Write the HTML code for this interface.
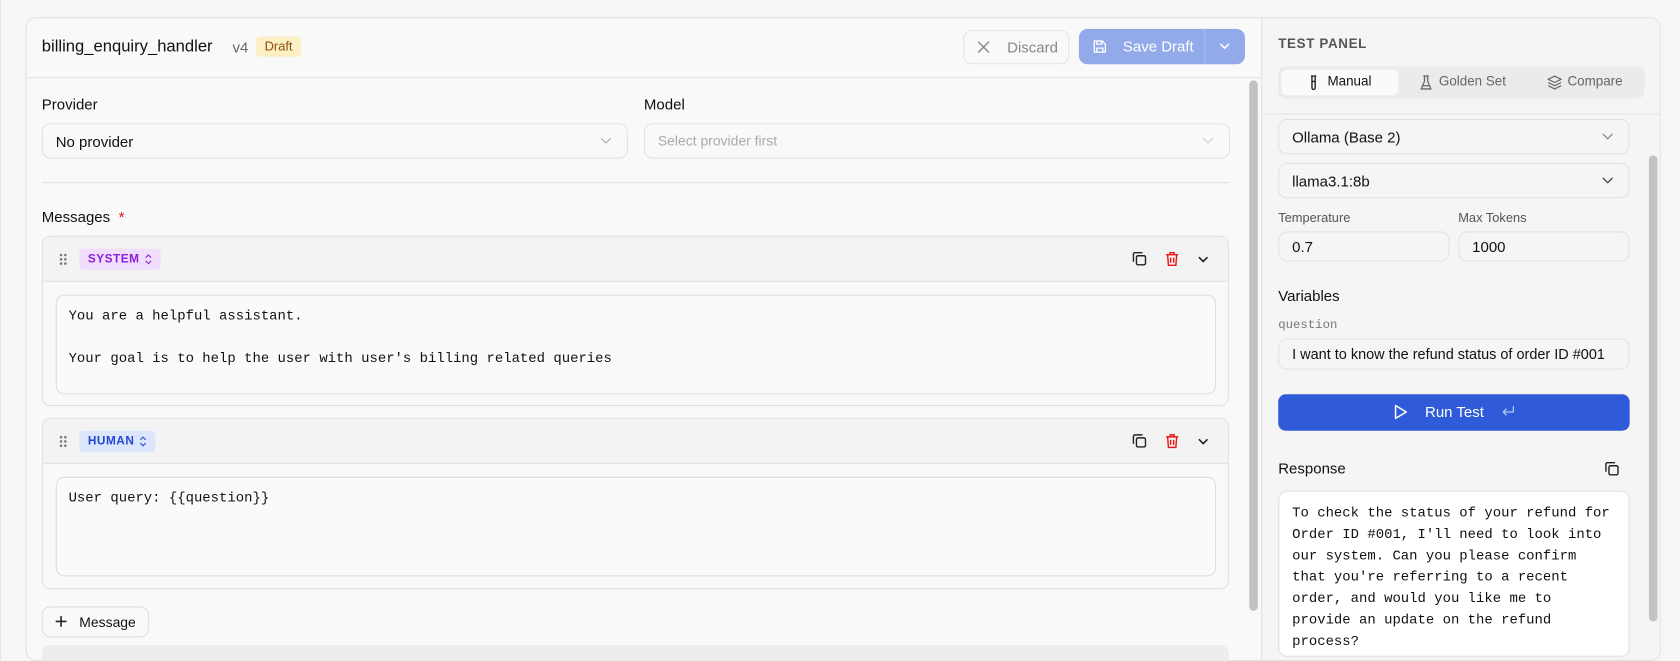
<!DOCTYPE html>
<html><head><meta charset="utf-8"><style>
*{box-sizing:border-box;margin:0;padding:0}
html,body{width:1680px;height:661px;overflow:hidden;background:#f6f6f6;font-family:"Liberation Sans",sans-serif;color:#111}
#w{position:absolute;left:0;top:0;width:1568px;height:617px;transform:scale(1.071428);transform-origin:0 0}
.a{position:absolute}
.mono{font-family:"Liberation Mono",monospace}
.inp{position:absolute;border:1px solid #e2e2e2;border-radius:8px;background:#f9f9f9;font-size:14px;display:flex;align-items:center;padding-left:12px}
.chev{position:absolute;right:14px;top:50%;margin-top:-4px}
.lbl{position:absolute;font-size:14px;font-weight:500;color:#111}
.card{position:absolute;left:39px;width:1108px;border:1px solid #e0e0e0;border-radius:8px;background:#f9f9f9;overflow:hidden}
.ch{height:42px;background:#f3f3f3;border-bottom:1px solid #e0e0e0;position:relative}
.ta{position:absolute;left:12px;right:11px;border:1px solid #dedede;border-radius:8px;background:#fafafa;font-family:"Liberation Mono",monospace;font-size:13px;padding:9px 11px;line-height:20px;white-space:pre}
.role{position:absolute;left:34px;top:11px;height:20px;border-radius:4px;font-size:11px;font-weight:700;letter-spacing:.5px;padding:0 8px;display:flex;align-items:center}
</style></head><body><div id="w">
<div class="a" style="left:0;top:0;width:1px;height:617px;background:#e6e6e6"></div>
<div class="a" style="left:24px;top:16px;width:1526px;height:601px;border:1px solid #e2e2e2;border-radius:10px;background:#f9f9f9;overflow:hidden">
 <div class="a" style="left:1152px;top:0;width:374px;height:610px;background:#f5f5f5;border-left:1px solid #e2e2e2"></div>
 <div class="a" style="left:0;top:55px;width:1152px;height:1px;background:#e2e2e2"></div>
 <div class="a" style="left:1152px;top:89px;width:374px;height:1px;background:#e2e2e2"></div>
</div>
<div class="a" style="left:39px;top:35px;font-size:15.5px;font-weight:500">billing_enquiry_handler</div>
<div class="a" style="left:217px;top:36px;font-size:14px;color:#666">v4</div>
<div class="a" style="left:239px;top:34px;height:19px;padding:0 8px;background:#fcefc4;border-radius:4px;font-size:12px;color:#8a4f12;line-height:19px">Draft</div>
<div class="a" style="left:899px;top:28px;width:99px;height:32px;border:1px solid #e4e4e4;border-radius:8px;background:#f9f9f9;font-size:14px;color:#888;line-height:30px;padding-left:40px">Discard</div>
<svg class="a" style="left:912px;top:38px" width="12" height="12" viewBox="0 0 12 12"><path d="M1 1L11 11M11 1L1 11" stroke="#888" stroke-width="1.3"/></svg>
<div class="a" style="left:1007px;top:27px;width:155px;height:33px;border-radius:8px;background:#93aaea;color:#fff;font-size:14px;line-height:33px">
 <span class="a" style="left:41px">Save Draft</span>
 <div class="a" style="left:117px;top:0;width:1px;height:33px;background:#a9bbef"></div>
 <svg class="a" style="left:12px;top:9px" width="15" height="15" viewBox="0 0 16 16" fill="none" stroke="#fff" stroke-width="1.3"><path d="M2.5 2.5h8l3 3v8h-11z"/><path d="M5 2.5v3h5v-3M5 13.5v-4h6v4"/></svg>
 <svg class="a" style="left:131px;top:13px" width="10" height="7" viewBox="0 0 10 7"><path d="M1 1l4 4 4-4" stroke="#fff" stroke-width="1.4" fill="none"/></svg>
</div>
<div class="a" style="left:1166px;top:75px;width:8px;height:495px;border-radius:4px;background:#c2c2c2"></div>
<div class="lbl" style="left:39px;top:89px">Provider</div>
<div class="inp" style="left:39px;top:115px;width:547px;height:33px">No provider<svg class="chev" width="11" height="7" viewBox="0 0 11 7"><path d="M1 1l4.5 4.5L10 1" stroke="#aaa" fill="none"/></svg></div>
<div class="lbl" style="left:601px;top:89px">Model</div>
<div class="inp" style="left:601px;top:115px;width:547px;height:33px;color:#aaa;font-size:13px">Select provider first<svg class="chev" width="11" height="7" viewBox="0 0 11 7"><path d="M1 1l4.5 4.5L10 1" stroke="#ccc" fill="none"/></svg></div>
<div class="a" style="left:39px;top:170px;width:1108px;height:1px;background:#e0e0e0"></div>
<div class="lbl" style="left:39px;top:194px">Messages <span style="color:#e11;margin-left:4px">*</span></div>
<div class="card" style="top:220px;height:159px">
 <div class="ch">
  <svg class="a" style="left:15px;top:15px" width="8" height="12"><g fill="#777"><circle cx="2" cy="2" r="1.2"/><circle cx="6" cy="2" r="1.2"/><circle cx="2" cy="6" r="1.2"/><circle cx="6" cy="6" r="1.2"/><circle cx="2" cy="10" r="1.2"/><circle cx="6" cy="10" r="1.2"/></g></svg>
  <div class="role" style="background:#f0defc;color:#8a1fd6">SYSTEM <svg style="margin-left:5px" width="7" height="10" viewBox="0 0 7 10"><path d="M1 3.5l2.5-2.5 2.5 2.5M1 6.5l2.5 2.5 2.5-2.5" stroke="#8a1fd6" fill="none"/></svg></div>
  <svg class="a" style="left:1016px;top:13px" width="15" height="15" viewBox="0 0 16 16" fill="none" stroke="#222" stroke-width="1.4"><rect x="5" y="5" width="9" height="9" rx="1.5"/><path d="M2 11V3.5C2 2.7 2.7 2 3.5 2H11"/></svg>
  <svg class="a" style="left:1047px;top:13px" width="14" height="15" viewBox="0 0 14 16" fill="none" stroke="#e11" stroke-width="1.4"><path d="M1 4h12M5 4V2h4v2M2.5 4l.8 10.5h7.4L11.5 4M5.5 7v5M8.5 7v5"/></svg>
  <svg class="a" style="left:1078px;top:18px" width="10" height="7" viewBox="0 0 10 7"><path d="M1 1l4 4 4-4" stroke="#222" stroke-width="1.5" fill="none"/></svg>
 </div>
 <div class="ta" style="top:54px;height:93px">You are a helpful assistant.

Your goal is to help the user with user's billing related queries</div>
</div>
<div class="card" style="top:390px;height:160px">
 <div class="ch">
  <svg class="a" style="left:15px;top:15px" width="8" height="12"><g fill="#777"><circle cx="2" cy="2" r="1.2"/><circle cx="6" cy="2" r="1.2"/><circle cx="2" cy="6" r="1.2"/><circle cx="6" cy="6" r="1.2"/><circle cx="2" cy="10" r="1.2"/><circle cx="6" cy="10" r="1.2"/></g></svg>
  <div class="role" style="background:#dbe6fd;color:#2446d6">HUMAN <svg style="margin-left:5px" width="7" height="10" viewBox="0 0 7 10"><path d="M1 3.5l2.5-2.5 2.5 2.5M1 6.5l2.5 2.5 2.5-2.5" stroke="#2446d6" fill="none"/></svg></div>
  <svg class="a" style="left:1016px;top:13px" width="15" height="15" viewBox="0 0 16 16" fill="none" stroke="#222" stroke-width="1.4"><rect x="5" y="5" width="9" height="9" rx="1.5"/><path d="M2 11V3.5C2 2.7 2.7 2 3.5 2H11"/></svg>
  <svg class="a" style="left:1047px;top:13px" width="14" height="15" viewBox="0 0 14 16" fill="none" stroke="#e11" stroke-width="1.4"><path d="M1 4h12M5 4V2h4v2M2.5 4l.8 10.5h7.4L11.5 4M5.5 7v5M8.5 7v5"/></svg>
  <svg class="a" style="left:1078px;top:18px" width="10" height="7" viewBox="0 0 10 7"><path d="M1 1l4 4 4-4" stroke="#222" stroke-width="1.5" fill="none"/></svg>
 </div>
 <div class="ta" style="top:54px;height:93px">User query: {{question}}</div>
</div>
<div class="a" style="left:39px;top:566px;width:100px;height:29px;border:1px solid #dedede;border-radius:8px;background:#f9f9f9;font-size:13px;line-height:27px;padding-left:34px">Message</div>
<svg class="a" style="left:51px;top:574px" width="12" height="12" viewBox="0 0 12 12"><path d="M6 1v10M1 6h10" stroke="#222" stroke-width="1.5"/></svg>
<div class="a" style="left:39px;top:602px;width:1108px;height:15px;background:#ededed;border-radius:8px 8px 0 0"></div>
<div class="a" style="left:1193px;top:34px;font-size:12.5px;font-weight:700;letter-spacing:.6px;color:#555">TEST PANEL</div>
<div class="a" style="left:1193px;top:62px;width:342px;height:30px;background:#ebebeb;border-radius:7px"></div>
<div class="a" style="left:1196px;top:65px;width:109px;height:24px;background:#fafafa;border-radius:5px"></div>
<svg class="a" style="left:1222px;top:70px" width="8" height="15" viewBox="0 0 8 15" fill="none" stroke="#222" stroke-width="1.3"><path d="M1.5 1h5M2.5 1v11a1.5 1.5 0 003 0V1M2.5 6h3"/></svg>
<div class="a" style="left:1239px;top:69px;font-size:12.5px">Manual</div>
<svg class="a" style="left:1325px;top:70px" width="12" height="15" viewBox="0 0 12 15" fill="none" stroke="#666" stroke-width="1.2"><path d="M3.5 1h5M4.5 1v5L1.5 13h9L7.5 6V1M2.5 10h7"/></svg>
<div class="a" style="left:1343px;top:69px;font-size:12.5px;color:#666">Golden Set</div>
<svg class="a" style="left:1444px;top:70px" width="14" height="14" viewBox="0 0 14 14" fill="none" stroke="#666" stroke-width="1.1"><path d="M7 1L1 4l6 3 6-3zM1 7l6 3 6-3M1 10l6 3 6-3"/></svg>
<div class="a" style="left:1463px;top:69px;font-size:12.5px;color:#666">Compare</div>
<div class="a" style="left:1539px;top:145px;width:8px;height:435px;border-radius:4px;background:#c2c2c2"></div>
<div class="inp" style="left:1193px;top:111px;width:328px;height:33px;background:#f5f5f5">Ollama (Base 2)<svg class="chev" width="11" height="7" viewBox="0 0 11 7"><path d="M1 1l4.5 4.5L10 1" stroke="#777" fill="none"/></svg></div>
<div class="inp" style="left:1193px;top:152px;width:328px;height:33px;background:#f5f5f5">llama3.1:8b<svg class="chev" width="11" height="7" viewBox="0 0 11 7"><path d="M1 1l4.5 4.5L10 1" stroke="#444" fill="none" stroke-width="1.2"/></svg></div>
<div class="a" style="left:1193px;top:196px;font-size:12px;color:#555">Temperature</div>
<div class="a" style="left:1361px;top:196px;font-size:12px;color:#555">Max Tokens</div>
<div class="inp" style="left:1193px;top:216px;width:160px;height:28px;background:#f5f5f5">0.7</div>
<div class="inp" style="left:1361px;top:216px;width:160px;height:28px;background:#f5f5f5">1000</div>
<div class="a" style="left:1193px;top:268px;font-size:14px;font-weight:500">Variables</div>
<div class="a mono" style="left:1193px;top:297px;font-size:11.5px;color:#777">question</div>
<div class="inp" style="left:1193px;top:316px;width:328px;height:29px;background:#f5f5f5;font-size:13.5px">I want to know the refund status of order ID #001</div>
<div class="a" style="left:1193px;top:368px;width:328px;height:34px;border-radius:7px;background:#2f5bd8"></div>
<svg class="a" style="left:1301px;top:377px" width="13" height="15" viewBox="0 0 13 15"><path d="M1.5 1.5v12l10-6z" stroke="#fff" stroke-width="1.4" fill="none" stroke-linejoin="round"/></svg>
<div class="a" style="left:1330px;top:376px;font-size:14px;color:#fff;font-weight:500">Run Test</div>
<svg class="a" style="left:1401px;top:378px" width="13" height="12" viewBox="0 0 13 12"><path d="M11.5 1v5.5H2M5 3.5L2 6.5 5 9.5" stroke="#b8c8f4" stroke-width="1.2" fill="none"/></svg>
<div class="a" style="left:1193px;top:429px;font-size:14px;font-weight:500">Response</div>
<svg class="a" style="left:1497px;top:430px" width="15" height="15" viewBox="0 0 16 16" fill="none" stroke="#222" stroke-width="1.4"><rect x="5" y="5" width="9" height="9" rx="1.5"/><path d="M2 11V3.5C2 2.7 2.7 2 3.5 2H11"/></svg>
<div class="a mono" style="left:1193px;top:458px;width:328px;height:155px;background:#fff;border:1px solid #e0e0e0;border-radius:8px;font-size:13px;line-height:20px;padding:10px 12px;white-space:pre">To check the status of your refund for
Order ID #001, I'll need to look into
our system. Can you please confirm
that you're referring to a recent
order, and would you like me to
provide an update on the refund
process?</div>
</div></body></html>
